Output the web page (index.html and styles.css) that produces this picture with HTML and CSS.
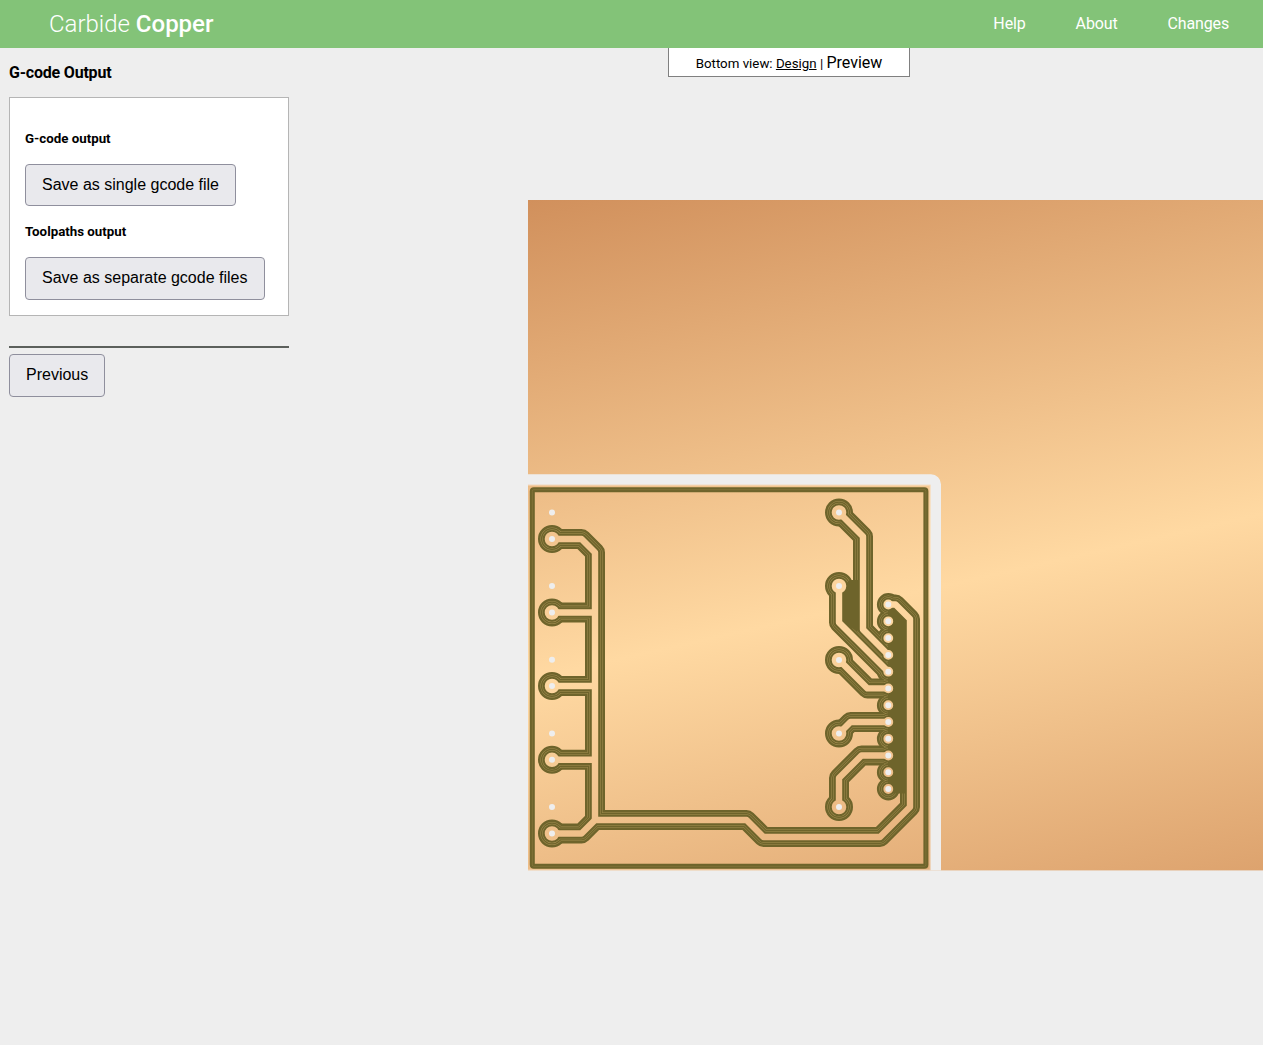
FILE: index.html
```html
<!DOCTYPE html>
<html lang="en">
<head>
<meta charset="utf-8">
<title>Carbide Copper</title>
<link rel="stylesheet" href="styles.css">
</head>
<body>
<header class="topbar">
  <div class="brand">Carbide <b>Copper</b></div>
  <nav class="nav"><a>Help</a><a>About</a><a>Changes</a></nav>
</header>
<main class="layout">
  <aside class="sidebar">
    <h1 class="title">G-code Output</h1>
    <section class="panel">
      <h2 class="label">G-code output</h2>
      <button class="btn">Save as single gcode file</button>
      <h2 class="label label-next">Toolpaths output</h2>
      <button class="btn btn-files">Save as separate gcode files</button>
    </section>
    <hr class="rule">
    <button class="btn">Previous</button>
  </aside>
  <section class="stage">
    <div class="views">Bottom view: <a class="view-link">Design</a> | <span class="view-current">Preview</span></div>
    <svg class="board" viewBox="315 48 948 997">
      <defs>
        <linearGradient id="copper" gradientUnits="userSpaceOnUse" x1="528" y1="200" x2="734" y2="1113">
          <stop offset="0" stop-color="#d1905c"/>
          <stop offset=".5" stop-color="#ffd9a2"/>
          <stop offset="1" stop-color="#d1905c"/>
        </linearGradient>
        <g id="traces">
          <path d="M552 539H581.5L595 552.5V820"/>
          <path d="M552 612.5H595M552 686H595M552 759.8H595"/>
          <path d="M552 833.5H581.5L595 820H746.5L763.5 837H880L910 807V619L895.5 604.5H888.3"/>
          <path d="M839 512.5L863 536.5V629.5L888.3 655"/>
          <path d="M839 586V622.5L888.3 671.8"/>
          <path d="M839 660L867.5 688.4H888.3"/>
          <path d="M839 733.5L850.5 722H888.3"/>
          <path d="M839 807V778L861.5 755.5H888.3"/>
        </g>
        <path id="large" d="M552 539h0M552 612.5h0M552 686h0M552 759.8h0M552 833.5h0M839 512.5h0M839 586h0M839 660h0M839 733.5h0M839 807h0"/>
        <path id="small" d="M888.3 604.5h0M888.3 621.3h0M888.3 638.1h0M888.3 654.9h0M888.3 671.7h0M888.3 688.4h0M888.3 705.2h0M888.3 722h0M888.3 738.8h0M888.3 755.5h0M888.3 772.2h0M888.3 789h0"/>
      </defs>
      <rect class="copper" x="528" y="200" width="760" height="670.4"/>
      <path class="cutout" d="M528 474.2H931A10 10 0 0 1 941 484.2V870.6H930.6V484.8H528Z"/>
      <path class="fringe" d="M528 485.4H930.2V869.9H528"/>
      <rect class="outline" x="532.3" y="489.7" width="393.6" height="376.6" rx="1.5"/>
      <rect class="outline-pass" x="532.3" y="489.7" width="393.6" height="376.6" rx="1.5"/>

      <g class="mill pass-1"><use href="#traces"/><use class="lg" href="#large"/><use class="sm" href="#small"/></g>
      <g class="mill pass-2"><use href="#traces"/><use class="lg" href="#large"/><use class="sm" href="#small"/></g>
      <g class="mill pass-3"><use href="#traces"/><use class="lg" href="#large"/><use class="sm" href="#small"/></g>
      <g class="mill pass-4"><use href="#traces"/><use class="lg" href="#large"/><use class="sm" href="#small"/></g>
      <g class="mill pass-5"><use href="#traces"/><use class="lg" href="#large"/><use class="sm" href="#small"/></g>
      <path class="cleared" d="M888 605H893L907 620V793.6H888ZM839 590L850 580H860V632L839 622Z"/>
      <g class="mill pass-6"><use href="#traces"/><use class="lg" href="#large"/><use class="sm" href="#small"/></g>

      <g class="holes">
        <use href="#large"/><use href="#small"/>
        <path d="M552 512.5h0M552 586h0M552 659.8h0M552 733.5h0M552 807h0"/>
      </g>
    </svg>
  </section>
</main>
</body>
</html>
```
FILE: styles.css
```css
* { box-sizing: border-box; }
body {
  margin: 0;
  background: #eee;
  color: #000;
  font-family: Roboto, "Liberation Sans", sans-serif;
  font-size: 16px;
  overflow: hidden;
}
.topbar {
  display: flex;
  justify-content: space-between;
  align-items: center;
  height: 48px;
  padding: 0 34px 2px 49px;
  background: #83c378;
  color: #fff;
}
.brand { padding-top: 2px; font-size: 24px; font-weight: 300; line-height: 46px; white-space: nowrap; letter-spacing: 0; }
.brand b { font-weight: 500; }
.nav { display: flex; gap: 50px; letter-spacing: -0.14px; }
.layout { display: grid; grid-template-columns: 315px 1fr; height: 997px; }
.sidebar { padding: 15px 26px 0 9px; }
.title { margin: 0; font-size: 16px; line-height: 19px; font-weight: 700; letter-spacing: -0.2px; }
.panel { margin-top: 15px; height: 219px; padding: 32px 15px 0; background: #fff; border: 1px solid #b5b5b5; }
.label { margin: 0 0 17px; font-size: 13.3px; line-height: 17px; font-weight: 700; }
.label-next { margin-top: 17px; }
.btn {
  display: block;
  height: 43px;
  padding: 0 16px 2px;
  border: 1px solid #8f8f9d;
  border-radius: 4px;
  background: #e9e9ed;
  color: #000;
  font: 16px "Liberation Sans", Arial, sans-serif;
  white-space: nowrap;
}
.label:first-child + .btn { height: 42px; padding-bottom: 0; }
.btn-files { padding-right: 17px; }
.rule { margin: 30px 0 6px; border: 0; height: 2px; background: #5c605c; }
.stage { position: relative; }
.board { display: block; width: 948px; height: 997px; }
.views {
  position: absolute;
  top: 0;
  left: 50%;
  width: 242px;
  height: 29px;
  transform: translateX(-50%);
  border: 1px solid #808080;
  border-top: 0;
  background: #fff;
  font-size: 13.3px;
  line-height: 30px;
  text-align: center;
  white-space: nowrap;
}
.view-link { text-decoration: underline; }
.view-current { font-size: 16px; }

.copper { fill: url(#copper); }
.cutout { fill: #eee; }
.fringe { fill: none; stroke: #fff; stroke-opacity: .25; stroke-width: 1.4; }
.outline { fill: none; stroke: #6e642b; stroke-width: 5; stroke-linejoin: round; }
.outline-pass { fill: none; stroke: #8c7a40; stroke-width: .6; }
.cleared { fill: #6e642b; }
.mill { fill: none; stroke-linejoin: round; }
.lg, .sm, .holes { stroke-linecap: round; }
.pass-1, .pass-3, .pass-5 { stroke: #6e642b; }
.pass-2, .pass-4 { stroke: #a18d50; }
.pass-6 { stroke: url(#copper); }
.pass-1 { stroke-width: 20; }
.pass-1 .lg { stroke-width: 28; }
.pass-1 .sm { stroke-width: 22.8; }
.pass-2 { stroke-width: 15.2; }
.pass-2 .lg { stroke-width: 23.2; }
.pass-2 .sm { stroke-width: 18; }
.pass-3 { stroke-width: 14.2; }
.pass-3 .lg { stroke-width: 22.2; }
.pass-3 .sm { stroke-width: 17; }
.pass-4 { stroke-width: 11.6; }
.pass-4 .lg { stroke-width: 19.6; }
.pass-4 .sm { stroke-width: 14.4; }
.pass-5 { stroke-width: 10.6; }
.pass-5 .lg { stroke-width: 18.6; }
.pass-5 .sm { stroke-width: 13.4; }
.pass-6 { stroke-width: 6.4; }
.pass-6 .lg { stroke-width: 14.6; }
.pass-6 .sm { stroke-width: 9.8; }
.holes { fill: none; stroke: #eee; stroke-width: 6; }
```
